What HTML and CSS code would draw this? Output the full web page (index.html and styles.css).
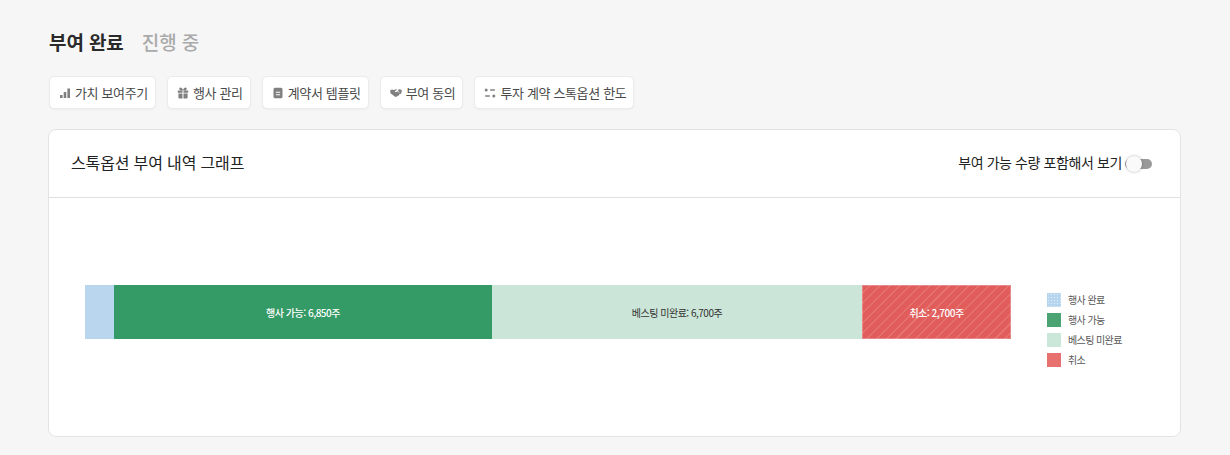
FILE: index.html
```html
<!DOCTYPE html>
<html lang="ko">
<head>
    <meta charset="UTF-8">
    <meta name="viewport" content="width=device-width, initial-scale=1.0">
    <title>스톡옵션 부여 내역</title>
    <link rel="stylesheet" href="styles.css">
</head>
<body>
    <div class="tabs">
        <span class="tab active">부여 완료</span>
        <span class="tab">진행 중</span>
    </div>

    <div class="actions">
        <button class="action">
            <svg class="icon" viewBox="0 0 12 12"><path d="M1 8h2.600v3H1zM4.700 5h2.600v6H4.700zM8.400 1.500H11V11H8.400z"/></svg>
            가치 보여주기
        </button>
        <button class="action">
            <svg class="icon" viewBox="0 0 12 12"><path d="M.8 3.400h4.700v2.400H.8zM6.500 3.400h4.700v2.400H6.500zM1.400 6.600h4.100v4.900H2.400a1 1 0 0 1-1-1zM6.500 6.600h4.100v3.900a1 1 0 0 1-1 1H6.500zM2.800.7c1.300-.6 2.600.7 3.200 2.200C6.600 1.400 7.900.1 9.200.7c1 .6.600 2.100-.6 2.500H3.400C2.200 2.800 1.800 1.300 2.800.7z"/></svg>
            행사 관리
        </button>
        <button class="action">
            <svg class="icon" viewBox="0 0 12 12"><path fill-rule="evenodd" d="M3 .8h6a1.500 1.500 0 0 1 1.500 1.500v7.400A1.500 1.500 0 0 1 9 11.200H3a1.500 1.500 0 0 1-1.500-1.500V2.300A1.500 1.500 0 0 1 3 .8zm.9 4v1h4.200v-1zm0 2.400v1h4.200v-1z"/></svg>
            계약서 템플릿
        </button>
        <button class="action">
            <svg class="icon" viewBox="0 0 12 12"><path d="M0 3.600 2 2.500l2 .6 1.800-.8 1.300.3-2.300 2c.5.700 1.300.7 1.900.2l.8-.6 2.600 2.600-1 1-.5.900-1 .1-.6.800-1 .1-.6.300L1.500 6.900 .8 7zM8.300 2.400l1.800-.2L12 3.500l-.9 3.200-.8.200L8 3.400z"/></svg>
            부여 동의
        </button>
        <button class="action">
            <svg class="icon" viewBox="0 0 12 12"><circle cx="2.200" cy="3" r="1.500"/><rect x="6" y="2.300" width="5" height="1.400" rx=".7"/><rect x="1" y="8.300" width="5" height="1.400" rx=".7"/><circle cx="9.800" cy="9" r="1.500"/></svg>
            투자 계약 스톡옵션 한도
        </button>
    </div>

    <section class="card">
        <header class="card-head">
            <h2 class="card-title">스톡옵션 부여 내역 그래프</h2>
            <div class="toggle-row">
                <span>부여 가능 수량 포함해서 보기</span>
                <span class="toggle"><span class="knob"></span></span>
            </div>
        </header>
        <div class="chart">
            <div class="bar">
                <div class="seg done"></div>
                <div class="seg ready">행사 가능: 6,850주</div>
                <div class="seg vesting">베스팅 미완료: 6,700주</div>
                <div class="seg cancel">취소: 2,700주</div>
            </div>
            <ul class="legend">
                <li><span class="swatch sw-done"></span>행사 완료</li>
                <li><span class="swatch sw-ready"></span>행사 가능</li>
                <li><span class="swatch sw-vesting"></span>베스팅 미완료</li>
                <li><span class="swatch sw-cancel"></span>취소</li>
            </ul>
        </div>
    </section>
</body>
</html>
```

FILE: styles.css
```css
* { box-sizing: border-box; }

body {
    margin: 0;
    padding: 29px 49px 18px 48px;
    background: #f6f6f6;
    color: #222;
    font-family: "Noto Sans CJK KR", "Noto Sans", sans-serif;
}

.tabs {
    display: flex;
    gap: 18px;
    height: 24px;
    padding-left: 1px;
    align-items: center;
    font-size: 19px;
    letter-spacing: -0.1px;
    font-weight: 500;
    color: #aaa;
}
.tab.active { color: #2a2a2a; font-weight: 700; }

.actions {
    display: flex;
    gap: 11px;
    margin-top: 23px;
    padding-left: 1px;
}
.action {
    display: flex;
    align-items: center;
    gap: 4px;
    height: 33px;
    padding: 0 7px 0 9px;
    background: #fff;
    border: 1px solid #ebebeb;
    border-radius: 5px;
    box-shadow: 0 1px 2px rgba(0, 0, 0, 0.04);
    color: #4a4a4a;
    font-family: inherit;
    font-size: 13px;
    letter-spacing: -0.35px;
}
.icon { width: 12px; height: 12px; fill: #808080; }

.card {
    margin-top: 20px;
    height: 308px;
    background: #fff;
    border: 1px solid #e3e3e3;
    border-radius: 8px;
}
.card-head {
    display: flex;
    justify-content: space-between;
    align-items: center;
    height: 68px;
    padding: 0 28px 3px 22px;
    border-bottom: 1px solid #e0e0e0;
}
.card-title {
    margin: 0;
    font-size: 16px;
    font-weight: 400;
    letter-spacing: -0.15px;
}
.toggle-row {
    display: flex;
    align-items: center;
    gap: 3px;
    font-size: 14px;
    letter-spacing: -0.4px;
}
.toggle {
    display: block;
    position: relative;
    width: 27px;
    height: 10px;
    margin-top: 3px;
    border-radius: 5px;
    background: #9a9a9a;
}
.knob {
    position: absolute;
    left: 1px;
    top: -3px;
    width: 16px;
    height: 16px;
    border-radius: 50%;
    background: #fafafa;
    box-shadow: 0 0 3px rgba(0, 0, 0, 0.3);
}

.chart {
    display: flex;
    align-items: center;
    padding: 0 40px 10px 36px;
    height: 238px;
}
.bar {
    display: flex;
    flex: none;
    width: 926px;
    height: 54px;
    font-size: 10px;
    letter-spacing: -0.5px;
}
.seg {
    display: flex;
    align-items: center;
    justify-content: center;
}
.done { width: 29px; background: #bad6ef; }
.ready { width: 378px; background: #349a66; color: #fff; font-weight: 500; }
.vesting { width: 370px; background: #cbe6d8; color: #333; }
.cancel {
    width: 149px;
    color: #fff;
    font-weight: 500;
    background: repeating-linear-gradient(135deg, #e15d5c 0 5.500px, #e67270 5.500px 7px);
    box-shadow: inset 0 0 0 1px rgba(255, 255, 255, 0.25);
}

.legend {
    list-style: none;
    margin: 36px 0 0 36px;
    padding: 0;
    display: flex;
    flex-direction: column;
    gap: 6px;
    font-size: 10px;
    line-height: 14px;
    letter-spacing: -0.6px;
    white-space: nowrap;
    color: #555;
}
.legend li { display: flex; align-items: center; gap: 7px; }
.swatch { width: 14px; height: 14px; }
.sw-done { background: radial-gradient(#dfecf8 30%, #b6d5ef 40%) 0 0 / 3px 3px; }
.sw-ready { background: radial-gradient(#5cae83 30%, #4ba374 40%) 0 0 / 2px 2px; }
.sw-vesting { background: radial-gradient(#d8eee2 30%, #cbe7d9 40%) 0 0 / 2px 2px; }
.sw-cancel { background: #e8716f; }
```
